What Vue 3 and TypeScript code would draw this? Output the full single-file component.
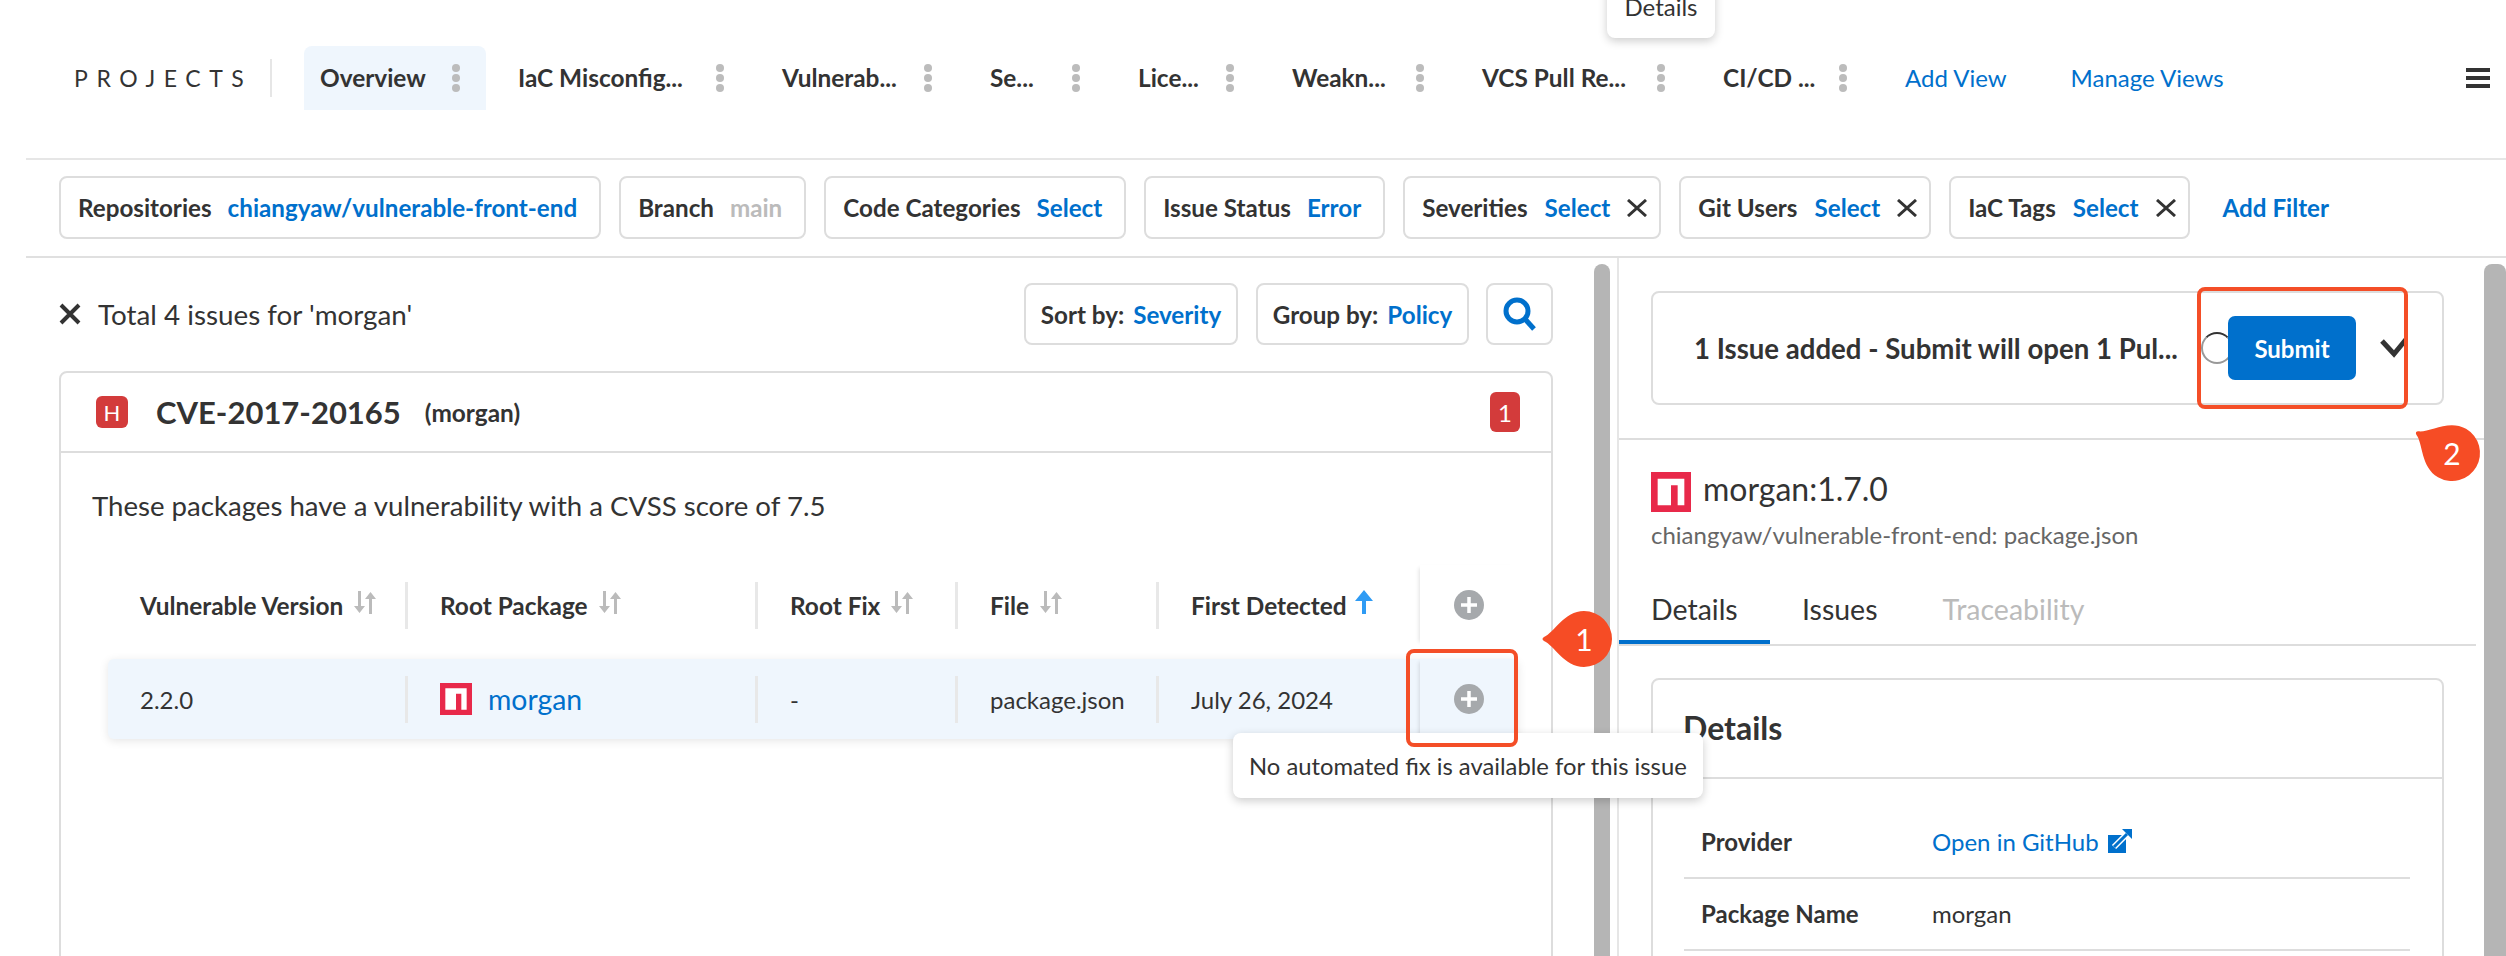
<script setup lang="ts">
interface Tab { label: string; width: number; active?: boolean }
interface Filter { label: string; value: string; muted?: boolean; closable?: boolean }
interface Column { label: string; sorted?: boolean }

const tabs: Tab[] = [
  { label: 'Overview', width: 182, active: true },
  { label: 'IaC Misconfig...', width: 248 },
  { label: 'Vulnerab...', width: 192 },
  { label: 'Se...', width: 132 },
  { label: 'Lice...', width: 138 },
  { label: 'Weakn...', width: 174 },
  { label: 'VCS Pull Re...', width: 225 },
  { label: 'CI/CD ...', width: 166 },
]

const filters: Filter[] = [
  { label: 'Repositories', value: 'chiangyaw/vulnerable-front-end' },
  { label: 'Branch', value: 'main', muted: true },
  { label: 'Code Categories', value: 'Select' },
  { label: 'Issue Status', value: 'Error' },
  { label: 'Severities', value: 'Select', closable: true },
  { label: 'Git Users', value: 'Select', closable: true },
  { label: 'IaC Tags', value: 'Select', closable: true },
]

const columns: Column[] = [
  { label: 'Vulnerable Version' },
  { label: 'Root Package' },
  { label: 'Root Fix' },
  { label: 'File' },
  { label: 'First Detected', sorted: true },
]
</script>

<template>
  <div class="page">
    <header class="topnav">
      <span class="brand">PROJECTS</span>
      <nav class="tabs">
        <div
          v-for="tab in tabs"
          :key="tab.label"
          class="tab"
          :class="{ active: tab.active }"
          :style="{ width: tab.width + 'px' }"
        >
          <span>{{ tab.label }}</span>
          <svg class="dots" width="12" height="30" viewBox="0 0 12 30">
            <circle cx="6" cy="5" r="4" />
            <circle cx="6" cy="15" r="4" />
            <circle cx="6" cy="25" r="4" />
          </svg>
        </div>
      </nav>
      <a class="link view-link first">Add View</a>
      <a class="link view-link">Manage Views</a>
      <div class="hamburger"><i></i><i></i><i></i></div>
    </header>

    <section class="filters">
      <div v-for="f in filters" :key="f.label" class="chip" :class="{ closable: f.closable }">
        <span>{{ f.label }}</span>
        <span class="chip-value" :class="{ muted: f.muted }">{{ f.value }}</span>
        <svg v-if="f.closable" class="chip-x" width="20" height="18" viewBox="0 0 20 18">
          <path d="M1 1l18 16M19 1L1 17" />
        </svg>
      </div>
      <a class="link add-filter">Add Filter</a>
    </section>

    <main class="main">
      <section class="left">
        <div class="toolbar">
          <svg class="close" width="22" height="22" viewBox="0 0 22 22">
            <path d="M2 2l18 18M20 2L2 20" />
          </svg>
          <span class="total">Total 4 issues for 'morgan'</span>
          <button class="tool-btn sort"><span>Sort by:</span><span class="blue">Severity</span></button>
          <button class="tool-btn group"><span>Group by:</span><span class="blue">Policy</span></button>
          <button class="tool-btn search">
            <svg width="34" height="34" viewBox="0 0 34 34">
              <circle cx="14" cy="14" r="11" />
              <path d="M22 22l9 10" />
            </svg>
          </button>
        </div>

        <article class="issue-card">
          <div class="issue-head">
            <span class="sev">H</span>
            <span class="cve">CVE-2017-20165</span>
            <span class="pkg">(morgan)</span>
            <span class="count">1</span>
          </div>
          <div class="issue-body">
            <p class="desc">These packages have a vulnerability with a CVSS score of 7.5</p>
            <div class="table-head grid-row">
              <div v-for="col in columns" :key="col.label" class="cell head-cell">
                <span>{{ col.label }}</span>
                <svg v-if="col.sorted" class="sort-on" width="20" height="24" viewBox="0 0 20 24">
                  <path d="M10 0l9 11h-7v13H8V11H1z" />
                </svg>
                <svg v-else class="sort-off" width="24" height="23" viewBox="0 0 24 23">
                  <path d="M5 0h3v15h4l-5.500 7L1 15h4zM16 23h3V8h4l-5.500-7L12 8h4z" />
                </svg>
              </div>
              <div class="action">
                <svg class="plus" width="30" height="30" viewBox="0 0 30 30">
                  <circle cx="15" cy="15" r="15" />
                  <path d="M15 7v16M7 15h16" />
                </svg>
              </div>
            </div>
            <div class="table-row grid-row">
              <div class="cell">2.2.0</div>
              <div class="cell">
                <svg class="npm" width="32" height="32" viewBox="0 0 18 18">
                  <path fill="#e8294a" d="M0 0h18v18H0z" />
                  <path fill="#fff" d="M3 3v12h6V6h3v9h3V3z" />
                </svg>
                <a class="link morgan">morgan</a>
              </div>
              <div class="cell">-</div>
              <div class="cell">package.json</div>
              <div class="cell">July 26, 2024</div>
              <div class="action">
                <svg class="plus" width="30" height="30" viewBox="0 0 30 30">
                  <circle cx="15" cy="15" r="15" />
                  <path d="M15 7v16M7 15h16" />
                </svg>
              </div>
            </div>
          </div>
        </article>
      </section>

      <div class="scrollbar left-bar"></div>

      <aside class="right">
        <div class="submit-wrap">
          <div class="submit-card">
            <span class="submit-text">1 Issue added - Submit will open 1 Pul...</span>
            <span class="spinner"></span>
            <button class="submit">Submit</button>
            <svg class="chevron" width="25" height="20" viewBox="0 0 25 20">
              <path d="M2 3l12 13L28 -1" />
            </svg>
          </div>
        </div>

        <div class="pkg-head">
          <svg width="40" height="40" viewBox="0 0 18 18">
            <path fill="#e8294a" d="M0 0h18v18H0z" />
            <path fill="#fff" d="M3 3v12h6V6h3v9h3V3z" />
          </svg>
          <span class="pkg-name">morgan:1.7.0</span>
        </div>
        <div class="pkg-path">chiangyaw/vulnerable-front-end: package.json</div>

        <div class="detail-tabs">
          <span class="detail-tab on">Details</span>
          <span class="detail-tab">Issues</span>
          <span class="detail-tab off">Traceability</span>
        </div>

        <div class="detail-card">
          <h2 class="detail-title">Details</h2>
          <div class="detail-rows">
            <div class="detail-row">
              <span class="detail-label">Provider</span>
              <span class="github">
                <a class="link">Open in GitHub</a>
                <svg width="24" height="24" viewBox="0 0 24 24">
                  <rect fill="#0070cc" x="0" y="6" width="18" height="18" />
                  <path fill="none" stroke="#fff" stroke-width="6" d="M6 18L18 6" />
                  <path fill="none" stroke="#0070cc" stroke-width="3" d="M6 18L19 5" />
                  <path fill="#0070cc" d="M14 0h10v10z" />
                </svg>
              </span>
            </div>
            <div class="detail-row">
              <span class="detail-label">Package Name</span>
              <span>morgan</span>
            </div>
          </div>
        </div>
      </aside>

      <div class="scrollbar right-bar"></div>
    </main>

    <div class="tooltip details-tip">Details</div>
    <div class="tooltip fix-tip">No automated fix is available for this issue</div>

    <div class="callout-box box-one"></div>
    <div class="callout-box box-two"></div>

    <div class="marker marker-one">
      <svg width="56" height="56" viewBox="0 0 56 56">
        <path d="M-12 26C-2 22 8 0 28 0A28 28 0 1 1 28 56C8 56-2 34-12 30Q-15 28-12 26Z" />
      </svg>
      <span>1</span>
    </div>
    <div class="marker marker-two">
      <svg width="56" height="56" viewBox="0 0 56 56">
        <path d="M-12 26C-2 22 8 0 28 0A28 28 0 1 1 28 56C8 56-2 34-12 30Q-15 28-12 26Z" />
      </svg>
      <span>2</span>
    </div>
  </div>
</template>

<style>
html, body {
  margin: 0;
  background: #fff;
  overflow: hidden;
}
</style>

<style scoped>
.page {
  position: relative;
  width: 2506px;
  height: 956px;
  overflow: hidden;
  background: #fff;
  color: #333;
  font-family: Lato, "Noto Sans", sans-serif;
  font-size: 24px;
}

.link { color: #0070cc; }
.blue { color: #0070cc; }

.topnav {
  display: flex;
  align-items: center;
  height: 160px;
  margin-left: 26px;
  padding: 0 16px 3px 48px;
  box-sizing: border-box;
  border-bottom: 2px solid #e6e6e6;
}
.brand {
  width: 196px;
  height: 38px;
  line-height: 38px;
  border-right: 2px solid #e6e6e6;
  font-size: 23px;
  letter-spacing: 8.6px;
  margin-right: 32px;
  flex: none;
}
.tabs { display: flex; gap: 16px; }
.tab {
  display: flex;
  align-items: center;
  height: 64px;
  padding: 0 24px 0 16px;
  box-sizing: border-box;
  font-size: 24.400px;
  font-weight: 700;
  border-radius: 8px 8px 0 0;
  white-space: nowrap;
}
.tab.active { background: #eff6fd; }
.dots { margin-left: auto; flex: none; }
.dots circle { fill: #bcbcbc; }
.view-link { white-space: nowrap; }
.view-link.first { margin-left: 32px; margin-right: 64px; }
.hamburger {
  margin-left: auto;
  display: flex;
  flex-direction: column;
  gap: 4px;
  width: 24px;
}
.hamburger i { display: block; height: 4px; background: #333; }

.filters {
  display: flex;
  align-items: center;
  gap: 18px;
  height: 98px;
  margin-left: 26px;
  padding: 0 0 1px 33px;
  box-sizing: border-box;
  border-bottom: 2px solid #e0e0e0;
  font-size: 24.200px;
  font-weight: 700;
}
.chip {
  display: flex;
  align-items: center;
  gap: 16px;
  height: 63px;
  padding: 0 22px 0 17px;
  border: 2px solid #ddd;
  border-radius: 8px;
  box-sizing: border-box;
  white-space: nowrap;
}
.chip.closable { padding-right: 12px; gap: 17px; }
.chip-value { color: #0070cc; }
.chip-value.muted { color: #bbb; }
.chip-x { fill: none; stroke: #333; stroke-width: 3; }
.add-filter { margin-left: 15px; }

.main { display: flex; height: 698px; }
.left {
  width: 1568px;
  flex: none;
  padding: 25px 41px 0 33px;
  margin-left: 26px;
  box-sizing: border-box;
}
.toolbar { display: flex; align-items: center; height: 62px; }
.close { fill: none; stroke: #333; stroke-width: 4; flex: none; }
.total { margin-left: 17px; font-size: 27.800px; margin-right: auto; }
.tool-btn {
  display: flex;
  align-items: center;
  justify-content: center;
  gap: 9px;
  height: 62px;
  padding: 0;
  background: #fff;
  border: 2px solid #ddd;
  border-radius: 8px;
  color: #333;
  font: 700 24.200px Lato, "Noto Sans", sans-serif;
  box-sizing: border-box;
}
.tool-btn.sort { width: 214px; }
.tool-btn.group { width: 213px; margin-left: 18px; }
.tool-btn.search { width: 67px; margin-left: 17px; }
.search svg { fill: none; stroke: #0070cc; stroke-width: 5; }

.issue-card {
  margin-top: 26px;
  height: 700px;
  border: 2px solid #ddd;
  border-radius: 8px;
  box-sizing: border-box;
}
.issue-head {
  display: flex;
  align-items: center;
  height: 80px;
  padding: 0 31px 0 35px;
  box-sizing: border-box;
  border-bottom: 2px solid #ddd;
}
.sev {
  display: flex;
  align-items: center;
  justify-content: center;
  width: 32px;
  height: 32px;
  border-radius: 6px;
  background: #d33b3b;
  color: #fff;
  font-size: 22px;
}
.cve { margin-left: 28px; font-size: 31px; font-weight: 700; }
.pkg { margin-left: 24px; font-size: 24.400px; font-weight: 700; }
.count {
  display: flex;
  align-items: center;
  justify-content: center;
  width: 30px;
  height: 40px;
  margin-left: auto;
  border-radius: 6px;
  background: #d33b3b;
  color: #fff;
}

.issue-body { padding: 0 33px 0 47px; }
.desc { margin: 34px 0 0 -16px; height: 78px; line-height: 38px; font-size: 27.600px; }
.grid-row { display: grid; grid-template-columns: 297px 350px 200px 201px 264px 98px; align-items: center; }
.table-head { height: 80px; margin-bottom: 14px; }
.table-row {
  height: 80px;
  background: #eff6fd;
  border-radius: 6px;
  box-shadow: 0 2px 10px rgba(0, 0, 0, 0.1);
}
.cell {
  display: flex;
  align-items: center;
  height: 47px;
  padding-left: 32px;
  border-left: 3px solid #e8e8e8;
  box-sizing: border-box;
  white-space: nowrap;
}
.cell:first-child { border-left: 0; }
.head-cell { font-size: 24.400px; font-weight: 700; gap: 10px; }
.sort-off { fill: #bbb; margin-top: -6px; }
.sort-on { fill: #2f9bf4; margin: -6px 0 0 -3px; }
.action {
  display: flex;
  align-items: center;
  justify-content: center;
  align-self: stretch;
  box-shadow: -4px 0 4px -3px rgba(0, 0, 0, 0.12);
}
.plus circle { fill: #a6a9ac; }
.plus path { fill: none; stroke: #fff; stroke-width: 3.500; }
.npm { flex: none; }
.morgan { margin-left: 16px; font-size: 28.400px; }

.scrollbar {
  flex: none;
  width: 16px;
  margin-top: 6px;
  background: #b5b5b5;
  border-radius: 8px 8px 0 0;
}
.left-bar { margin-right: 7px; }
.right-bar { width: 22px; }

.right {
  flex: none;
  width: 867px;
  box-sizing: border-box;
  border-left: 2px solid #e6e6e6;
}
.submit-wrap {
  padding: 33px 40px 33px 32px;
  border-bottom: 2px solid #ddd;
}
.submit-card {
  display: flex;
  align-items: center;
  height: 114px;
  padding-left: 41px;
  border: 2px solid #ddd;
  border-radius: 8px;
  box-sizing: border-box;
}
.submit-text { width: 484px; flex: none; font-size: 27.600px; font-weight: 700; white-space: nowrap; }
.spinner {
  flex: none;
  width: 32px;
  height: 32px;
  margin: 0 -5px 0 23px;
  border: 2px solid #999;
  border-top-color: #333;
  border-radius: 50%;
  box-sizing: border-box;
}
.submit {
  position: relative;
  width: 128px;
  height: 64px;
  flex: none;
  padding: 0;
  background: #0070cc;
  border: 0;
  border-radius: 7px;
  color: #fff;
  font: 700 24px Lato, "Noto Sans", sans-serif;
}
.chevron { margin-left: 24px; fill: none; stroke: #333; stroke-width: 5; flex: none; }

.pkg-head {
  display: flex;
  gap: 12px;
  height: 72px;
  padding: 32px 0 0 32px;
  box-sizing: border-box;
}
.pkg-name { font-size: 32px; line-height: 34px; }
.pkg-path { padding: 2px 0 0 32px; color: #666; line-height: 42px; }
.detail-tabs {
  display: flex;
  height: 90px;
  margin: 0 8px 0 0;
  box-sizing: border-box;
  border-bottom: 2px solid #ddd;
  font-size: 28.500px;
}
.detail-tab {
  height: 88px;
  line-height: 34px;
  padding: 36px 33px 0 32px;
  box-sizing: border-box;
}
.detail-tab.on { width: 151px; border-bottom: 4px solid #0070cc; }
.detail-tab.off { color: #bbb; }
.detail-card {
  margin: 32px 40px 0 32px;
  height: 400px;
  border: 2px solid #ddd;
  border-radius: 8px;
  box-sizing: border-box;
}
.detail-title {
  height: 99px;
  margin: 0;
  padding-left: 30px;
  line-height: 95px;
  border-bottom: 2px solid #ddd;
  box-sizing: border-box;
  font-size: 32px;
  font-weight: 700;
}
.detail-rows { padding: 28px 32px 0 31px; }
.detail-row {
  display: flex;
  align-items: center;
  height: 72px;
  padding: 0 0 2px 17px;
  border-bottom: 2px solid #ddd;
  box-sizing: border-box;
}
.detail-label { width: 231px; font-weight: 700; flex: none; }
.github { display: flex; align-items: center; gap: 9px; }

.tooltip {
  position: absolute;
  background: #fff;
  border-radius: 8px;
  box-shadow: 0 3px 10px rgba(0, 0, 0, 0.2);
  box-sizing: border-box;
  white-space: nowrap;
}
.details-tip {
  left: 1607px;
  top: -30px;
  width: 108px;
  height: 68px;
  padding-top: 22px;
  text-align: center;
}
.fix-tip {
  left: 1233px;
  top: 733px;
  width: 470px;
  height: 65px;
  padding: 19px 0 0 16px;
  font-size: 23.800px;
}

.callout-box {
  position: absolute;
  border: 4px solid #f44e27;
  border-radius: 8px;
  box-sizing: border-box;
}
.box-one { left: 1406px; top: 649px; width: 112px; height: 98px; }
.box-two { left: 2197px; top: 287px; width: 211px; height: 122px; }

.marker {
  position: absolute;
  display: flex;
  align-items: center;
  justify-content: center;
  width: 56px;
  height: 56px;
  color: #fff;
  font-size: 30px;
}
.marker svg { position: absolute; inset: 0; overflow: visible; fill: #f64c25; }
.marker span { position: relative; }
.marker-one { left: 1556px; top: 611px; }
.marker-two { left: 2424px; top: 425px; }
.marker-two svg { transform: rotate(30deg); }
</style>
